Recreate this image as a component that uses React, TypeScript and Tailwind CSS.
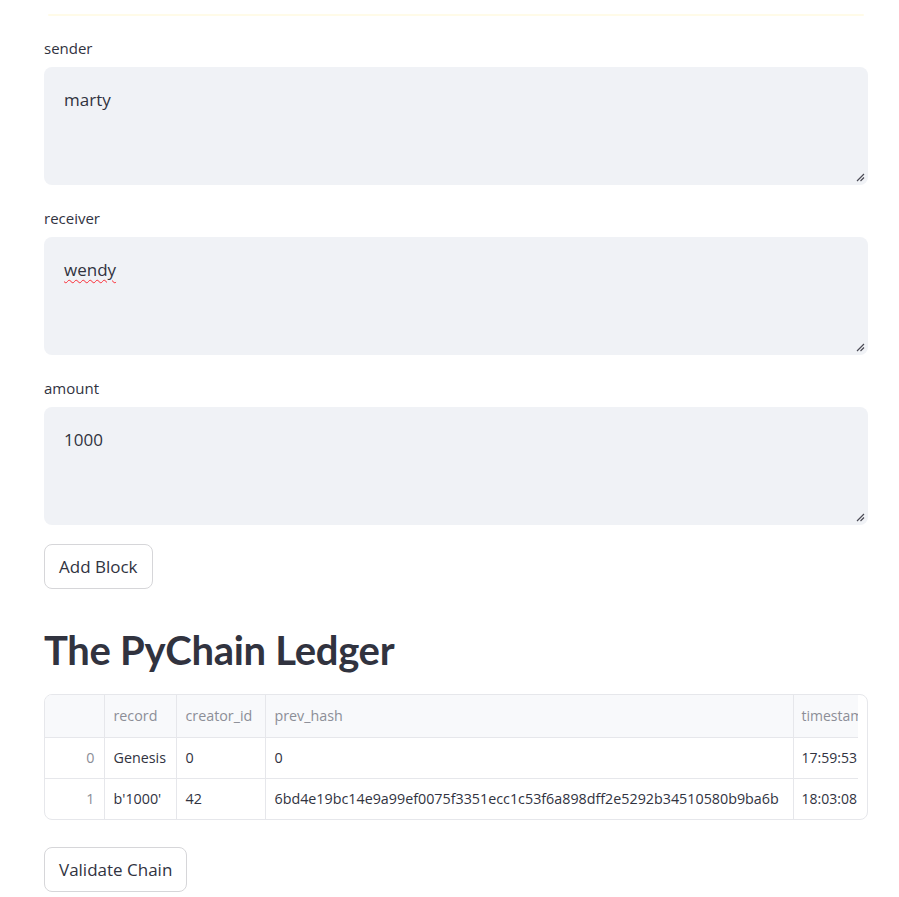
const font = { fontFamily: "'Open Sans', 'Noto Sans', sans-serif" };

function Field({ label, value, spell }: { label: string; value: string; spell?: boolean }) {
  return (
    <div className="flex flex-col">
      <label className="h-[19px] text-[15px] leading-[19px] text-[#31333f]">{label}</label>
      <div className="relative mt-[9px] h-[118px] rounded-lg bg-[#f0f2f6] px-5 pt-[21px]">
        <span
          className={
            "text-[17px] leading-[24px] text-[#31333f]" +
            (spell ? " underline decoration-wavy decoration-red-500 decoration-1 underline-offset-[3px]" : "")
          }
        >
          {value}
        </span>
        <svg className="absolute bottom-[3px] right-[3px] h-[10px] w-[10px]" viewBox="0 0 10 10">
          <path d="M2 9L9 2M5.5 9L9 5.5" stroke="#4a4a55" strokeWidth="1.2" />
        </svg>
      </div>
    </div>
  );
}

const rows = [
  { i: "0", record: "Genesis", creator: "0", prev: "0", ts: "17:59:53" },
  {
    i: "1",
    record: "b'1000'",
    creator: "42",
    prev: "6bd4e19bc14e9a99ef0075f3351ecc1c53f6a898dff2e5292b34510580b9ba6b",
    ts: "18:03:08",
  },
];

const cell = "overflow-hidden whitespace-nowrap border-[#e6e7eb] px-[9px]";
const last = "overflow-hidden whitespace-nowrap border-[#e6e7eb] pl-[8px] text-[14px]";

export default function App() {
  return (
    <main className="min-h-screen bg-white pl-11 pr-[31px] pt-[14px]" style={font}>
      {/* leftover bottom edge of a box above */}
      <div className="mx-1 h-[2px] rounded-full bg-[#fffbe8]" />

      <div className="mt-[23px] flex flex-col gap-[24px]">
        <Field label="sender" value="marty" />
        <Field label="receiver" value="wendy" spell />
        <Field label="amount" value="1000" />
      </div>

      <button className="mt-[19px] h-[45px] rounded-lg border border-[#d6d6d9] bg-white px-[14px] text-[17px] text-[#31333f]">
        Add Block
      </button>

      <h1
        className="mt-[36px] text-[40px] font-bold leading-[50px] tracking-[-0.3px] text-[#31333f]"
        style={{ fontFamily: "Lato, 'Open Sans', sans-serif" }}
      >
        The PyChain Ledger
      </h1>

      <div className="mt-[19px] overflow-hidden rounded-lg border border-[#e6e7eb]">
        <div className="mr-[9px] overflow-hidden">
          <table className="w-[828px] table-fixed border-collapse text-[14.3px] text-[#31333f]">
            <colgroup>
              <col className="w-[59px]" />
              <col className="w-[72px]" />
              <col className="w-[89px]" />
              <col className="w-[528px]" />
              <col className="w-[80px]" />
            </colgroup>
            <thead>
              <tr className="h-[42px] bg-[#f8f9fb] text-left text-[#8c8e97]">
                <th className={cell + " border-b border-r font-normal"} />
                <th className={cell + " border-b border-r font-normal"}>record</th>
                <th className={cell + " border-b border-r font-normal"}>creator_id</th>
                <th className={cell + " border-b border-r font-normal"}>prev_hash</th>
                <th className={last + " border-b font-normal"}>timestamp</th>
              </tr>
            </thead>
            <tbody>
              {rows.map((r, n) => {
                const b = n === 0 ? " border-b" : "";
                return (
                  <tr key={r.i} className="h-[41px]">
                    <td className={cell + " border-r text-right text-[#8c8e97]" + b}>{r.i}</td>
                    <td className={cell + " border-r" + b}>{r.record}</td>
                    <td className={cell + " border-r" + b}>{r.creator}</td>
                    <td className={cell + " border-r" + b}>{r.prev}</td>
                    <td className={last + b}>{r.ts}</td>
                  </tr>
                );
              })}
            </tbody>
          </table>
        </div>
      </div>

      <button className="mt-[27px] h-[45px] rounded-lg border border-[#d6d6d9] bg-white px-[14px] text-[17px] text-[#31333f]">
        Validate Chain
      </button>
    </main>
  );
}
